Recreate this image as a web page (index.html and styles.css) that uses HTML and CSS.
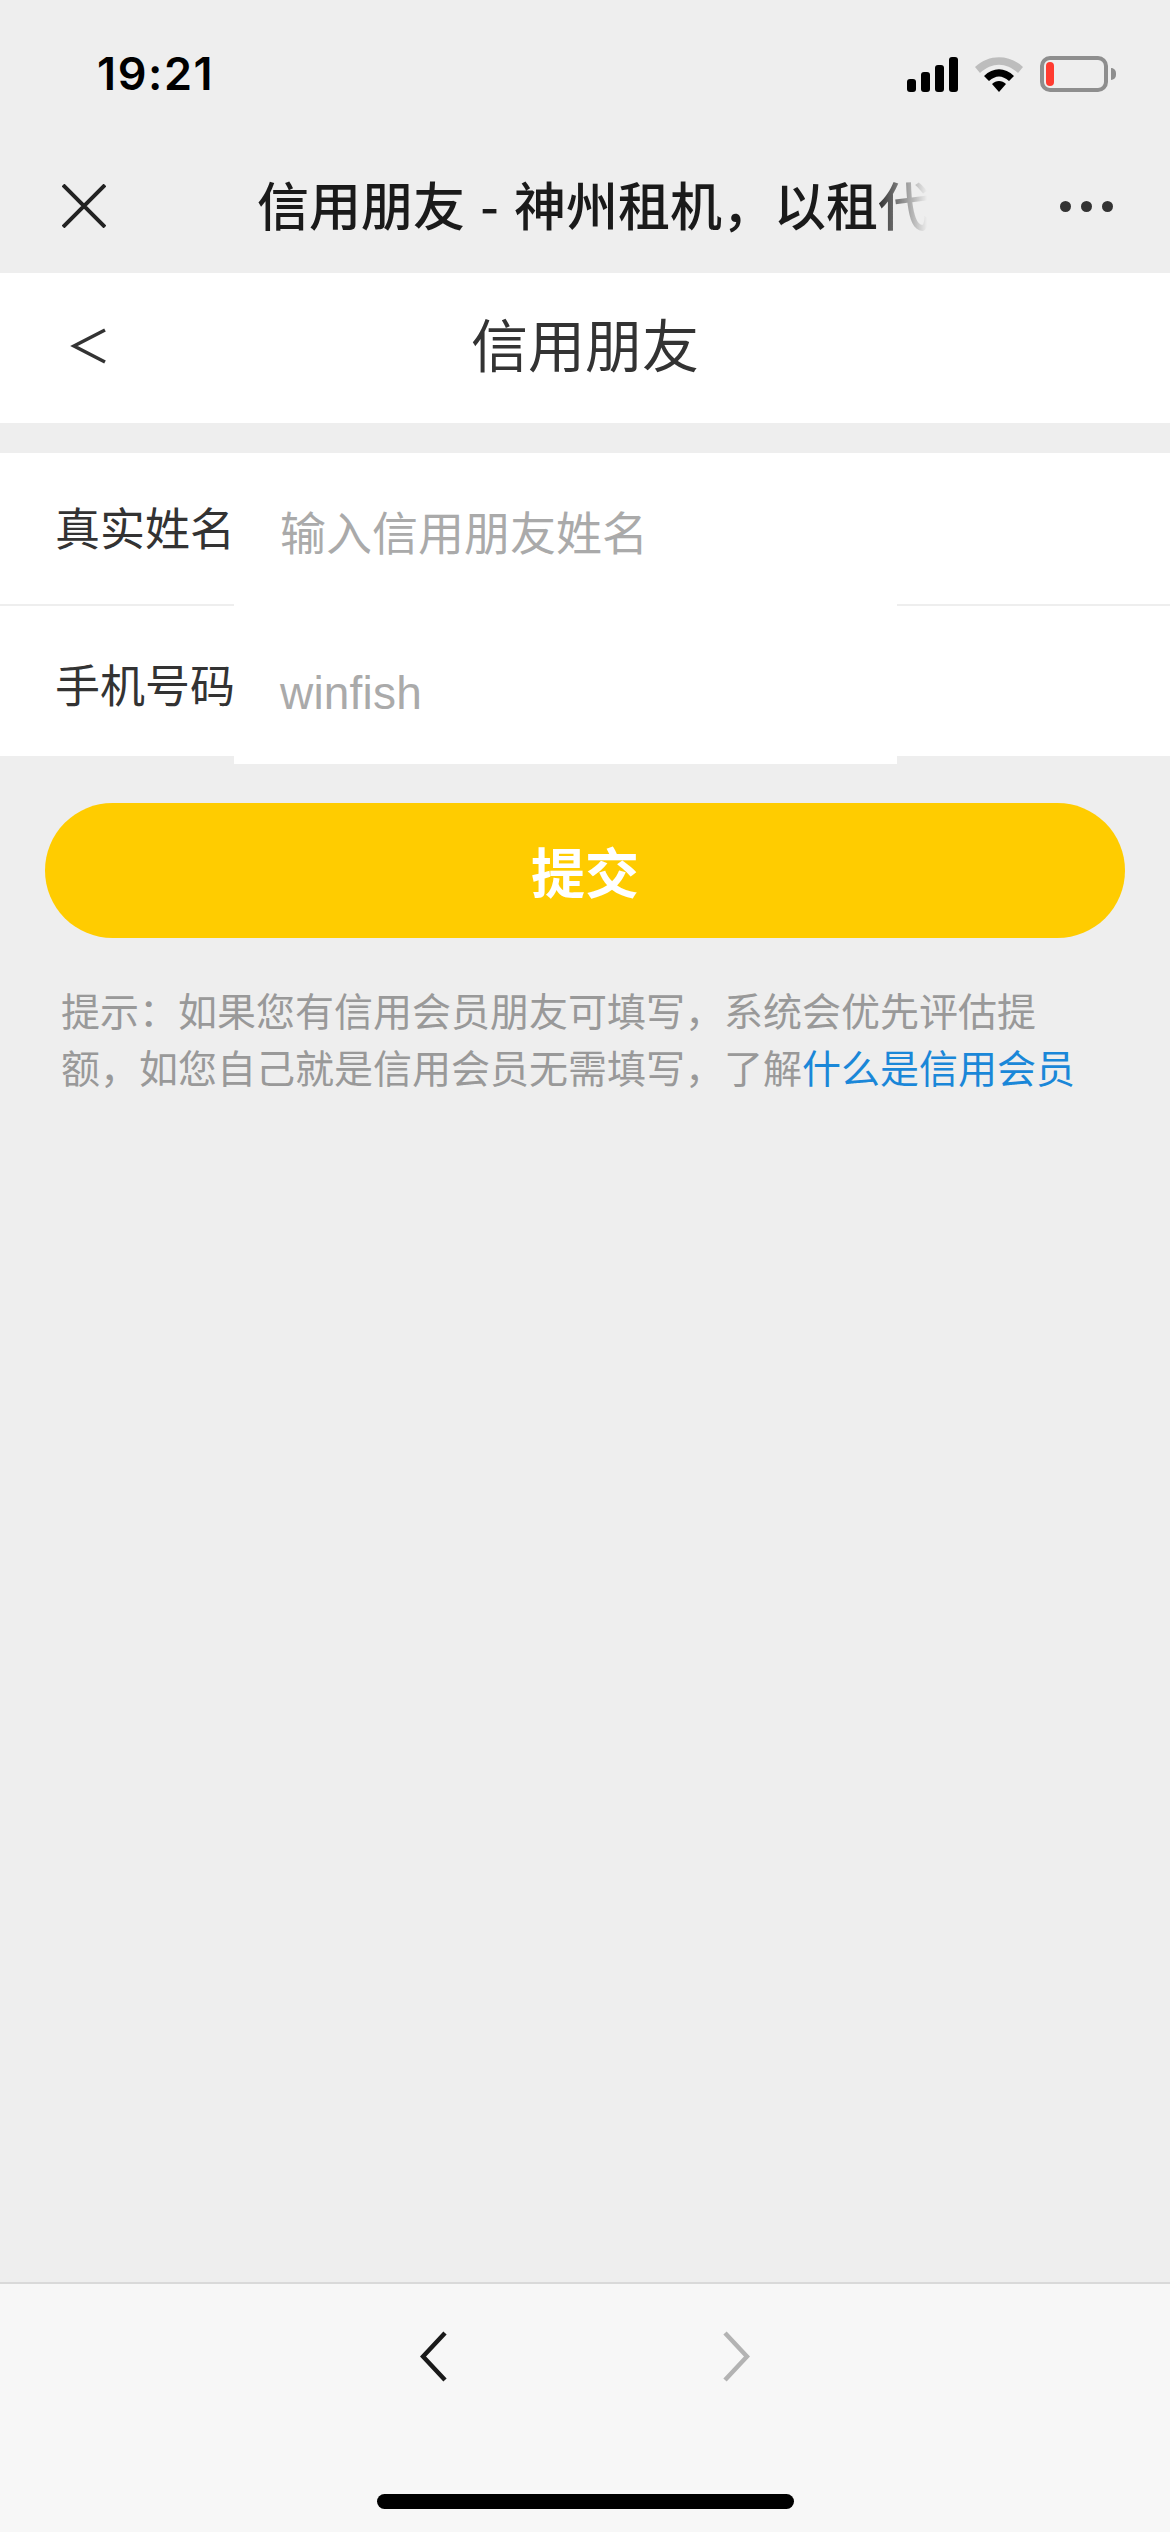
FILE: index.html
```html
<!DOCTYPE html>
<html lang="zh-CN">
<head>
    <meta charset="UTF-8">
    <meta name="viewport" content="width=device-width, initial-scale=1.0">
    <title>信用朋友</title>
    <link rel="stylesheet" href="styles.css">
</head>
<body>
    <div class="phone">
        <div class="status-bar">
            <span class="time">19:21</span>
            <div class="status-icons">
                <svg class="signal" width="51" height="35" viewBox="0 0 51 35">
                    <rect x="0" y="22" width="9" height="13" rx="3"/>
                    <rect x="14" y="15" width="9" height="20" rx="3"/>
                    <rect x="28" y="8" width="9" height="27" rx="3"/>
                    <rect x="42" y="0" width="9" height="35" rx="3"/>
                </svg>
                <svg class="wifi" width="48" height="37" viewBox="0 0 48 37">
                    <path d="M0 12 C14 -1 34 -1 48 12 L43 18 C31 7 17 7 5 18 Z" fill="#bdbdbd"/>
                    <path d="M9 21 C18 12 30 12 39 21 L34 26 C27 20 21 20 14 26 Z"/>
                    <path d="M17 29 C21 25 27 25 31 29 L24 37 Z"/>
                </svg>
                <div class="battery"><span class="battery-level"></span></div>
                <span class="battery-cap"></span>
            </div>
        </div>

        <div class="wx-nav">
            <svg class="wx-close" width="44" height="44" viewBox="0 0 44 44">
                <path d="M1 1 L43 43 M43 1 L1 43" fill="none" stroke="#222" stroke-width="4"/>
            </svg>
            <div class="wx-title">信用朋友 - 神州租机，以租代</div>
            <div class="wx-more"><i></i><i></i><i></i></div>
        </div>

        <div class="page-head">
            <svg class="page-back" width="38" height="36" viewBox="0 0 38 36">
                <path d="M37 2 L6 18 L37 34" fill="none" stroke="#333" stroke-width="3.5"/>
            </svg>
            <h1>信用朋友</h1>
        </div>

        <div class="form">
            <div class="row row-first">
                <span class="label">真实姓名</span>
                <div class="field field-name">输入信用朋友姓名</div>
            </div>
            <div class="row row-second">
                <span class="label">手机号码</span>
                <div class="field field-phone">winfish</div>
            </div>
        </div>

        <button class="submit">提交</button>

        <p class="hint">提示：如果您有信用会员朋友可填写，系统会优先评估提额，如您自己就是信用会员无需填写，了解<a href="#">什么是信用会员</a></p>

        <div class="toolbar">
            <div class="toolbar-arrows">
                <svg width="27" height="51" viewBox="0 0 27 51">
                    <path d="M25 2 L3 25.5 L25 49" fill="none" stroke="#1a1a1a" stroke-width="4.5"/>
                </svg>
                <svg width="27" height="51" viewBox="0 0 27 51">
                    <path d="M2 2 L24 25.5 L2 49" fill="none" stroke="#b3b3b3" stroke-width="4.5"/>
                </svg>
            </div>
            <div class="home-bar"></div>
        </div>
    </div>
</body>
</html>
```

FILE: styles.css
```css
* {
    box-sizing: border-box;
}

body {
    margin: 0;
    background-color: #eeeeee;
    font-family: "Noto Sans CJK SC", "Liberation Sans", sans-serif;
}

.phone {
    width: 1170px;
    height: 2532px;
    display: flex;
    flex-direction: column;
    overflow: hidden;
}

/* status bar */
.status-bar {
    height: 132px;
    flex-shrink: 0;
    display: flex;
    justify-content: space-between;
    padding: 54px 54px 0 97px;
}

.time {
    font-family: Inter, sans-serif;
    font-size: 45px;
    font-weight: 600;
    line-height: 40px;
    letter-spacing: 1.6px;
    color: #000;
}

.status-icons {
    display: flex;
    align-items: flex-start;
    padding-top: 2px;
}

.signal {
    margin-top: 1px;
}

.wifi {
    margin-left: 17px;
    margin-top: -1px;
}

.battery {
    width: 68px;
    height: 36px;
    margin-left: 17px;
    border: 4px solid #8e8e8e;
    border-radius: 10px;
    padding: 2px;
}

.battery-level {
    display: block;
    width: 8px;
    height: 24px;
    background-color: #ff3b30;
    border-radius: 4px;
}

.battery-cap {
    width: 5px;
    height: 12px;
    margin: 12px 0 0 3px;
    background-color: #8e8e8e;
    border-radius: 0 6px 6px 0;
}

/* wechat nav */
.wx-nav {
    height: 141px;
    flex-shrink: 0;
    display: flex;
    align-items: center;
    padding: 0 57px 0 62px;
}

.wx-close {
    flex-shrink: 0;
    margin-top: 6px;
}

.wx-title {
    width: 677px;
    margin-left: 151px;
    margin-top: 2px;
    font-size: 52px;
    font-weight: 500;
    line-height: 70px;
    word-spacing: 3.5px;
    color: #1a1a1a;
    white-space: nowrap;
    -webkit-mask-image: linear-gradient(to right, #000 91%, transparent 99%);
    mask-image: linear-gradient(to right, #000 91%, transparent 99%);
}

.wx-more {
    display: flex;
    gap: 10px;
    margin-left: auto;
    margin-top: 8px;
}

.wx-more i {
    width: 11px;
    height: 11px;
    border-radius: 50%;
    background-color: #333;
}

/* page header */
.page-head {
    height: 150px;
    flex-shrink: 0;
    background-color: #fff;
    display: flex;
    align-items: center;
    justify-content: center;
    position: relative;
}

.page-back {
    position: absolute;
    left: 68px;
    top: 55px;
}

.page-head h1 {
    margin: -12px 0 0;
    font-size: 57px;
    font-weight: 400;
    line-height: 80px;
    color: #333;
}

/* form */
.form {
    margin-top: 30px;
    background-color: #fff;
    flex-shrink: 0;
}

.row {
    display: flex;
    padding-left: 55px;
}

.row-first {
    height: 153px;
    border-bottom: 2px solid #eeeeee;
}

.row-second {
    height: 150px;
}

.label {
    width: 179px;
    flex-shrink: 0;
    font-size: 45px;
    line-height: 62px;
    color: #333;
    white-space: nowrap;
}

.row-first .label {
    padding-top: 43px;
}

.row-second .label {
    padding-top: 47px;
}

.field {
    width: 663px;
    padding-left: 46px;
    background-color: #fff;
    font-size: 46px;
    line-height: 64px;
    color: #aaaaaa;
    white-space: nowrap;
}

.field-name {
    padding-top: 45px;
    margin-bottom: -2px;
    position: relative;
}

.field-phone {
    height: 158px;
    padding-top: 55px;
    font-family: "Liberation Sans", sans-serif;
    letter-spacing: 0.2px;
}

/* button and hint */
.submit {
    display: block;
    flex-shrink: 0;
    width: 1080px;
    height: 135px;
    margin: 47px 0 0 45px;
    border: none;
    border-radius: 68px;
    background-color: #ffcc00;
    color: #fff;
    font-family: inherit;
    font-size: 54px;
    font-weight: 700;
}

.hint {
    margin: 43px 0 0;
    padding: 0 85px 0 61px;
    font-size: 39px;
    line-height: 57px;
    color: #999;
}

.hint a {
    color: #1a87d8;
    text-decoration: none;
}

/* bottom toolbar */
.toolbar {
    margin-top: auto;
    height: 250px;
    flex-shrink: 0;
    background-color: #f7f7f7;
    border-top: 2px solid #d9d9d9;
    display: flex;
    flex-direction: column;
    align-items: center;
}

.toolbar-arrows {
    display: flex;
    gap: 276px;
    margin-top: 47px;
}

.home-bar {
    width: 417px;
    height: 15px;
    margin-top: 112px;
    border-radius: 8px;
    background-color: #000;
}
```
